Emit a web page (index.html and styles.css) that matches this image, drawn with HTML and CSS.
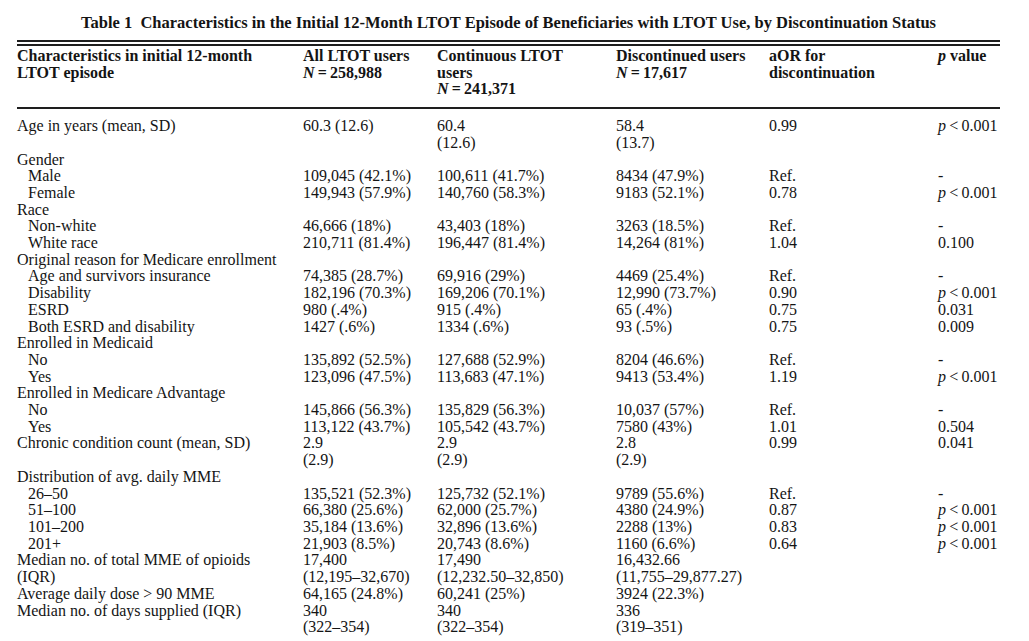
FILE: index.html
```html
<!DOCTYPE html>
<html lang="en">
<head>
<meta charset="utf-8">
<title>Table 1</title>
<link rel="stylesheet" href="styles.css">
</head>
<body>
<div class="page">
  <h1 class="title">Table 1&nbsp; Characteristics in the Initial 12-Month LTOT Episode of Beneficiaries with LTOT Use, by Discontinuation Status</h1>
  <div class="table">
    <div class="rule-double"></div>
    <div class="row head">
      <div>Characteristics in initial 12-month<br>LTOT episode</div>
      <div>All LTOT users<br><i>N</i>&thinsp;=&thinsp;258,988</div>
      <div>Continuous LTOT<br>users<br><i>N</i>&thinsp;=&thinsp;241,371</div>
      <div>Discontinued users<br><i>N</i>&thinsp;=&thinsp;17,617</div>
      <div>aOR for<br>discontinuation</div>
      <div><i>p</i> value</div>
    </div>
    <div class="body">
      <div class="row"><div>Age in years (mean, SD)</div><div>60.3 (12.6)</div><div>60.4<br>(12.6)</div><div>58.4<br>(13.7)</div><div>0.99</div><div><i>p</i>&thinsp;&lt;&thinsp;0.001</div></div>
      <div class="row"><div>Gender</div><div></div><div></div><div></div><div></div><div></div></div>
      <div class="row"><div class="ind">Male</div><div>109,045 (42.1%)</div><div>100,611 (41.7%)</div><div>8434 (47.9%)</div><div>Ref.</div><div>-</div></div>
      <div class="row"><div class="ind">Female</div><div>149,943 (57.9%)</div><div>140,760 (58.3%)</div><div>9183 (52.1%)</div><div>0.78</div><div><i>p</i>&thinsp;&lt;&thinsp;0.001</div></div>
      <div class="row"><div>Race</div><div></div><div></div><div></div><div></div><div></div></div>
      <div class="row"><div class="ind">Non-white</div><div>46,666 (18%)</div><div>43,403 (18%)</div><div>3263 (18.5%)</div><div>Ref.</div><div>-</div></div>
      <div class="row"><div class="ind">White race</div><div>210,711 (81.4%)</div><div>196,447 (81.4%)</div><div>14,264 (81%)</div><div>1.04</div><div>0.100</div></div>
      <div class="row"><div>Original reason for Medicare enrollment</div><div></div><div></div><div></div><div></div><div></div></div>
      <div class="row"><div class="ind">Age and survivors insurance</div><div>74,385 (28.7%)</div><div>69,916 (29%)</div><div>4469 (25.4%)</div><div>Ref.</div><div>-</div></div>
      <div class="row"><div class="ind">Disability</div><div>182,196 (70.3%)</div><div>169,206 (70.1%)</div><div>12,990 (73.7%)</div><div>0.90</div><div><i>p</i>&thinsp;&lt;&thinsp;0.001</div></div>
      <div class="row"><div class="ind">ESRD</div><div>980 (.4%)</div><div>915 (.4%)</div><div>65 (.4%)</div><div>0.75</div><div>0.031</div></div>
      <div class="row"><div class="ind">Both ESRD and disability</div><div>1427 (.6%)</div><div>1334 (.6%)</div><div>93 (.5%)</div><div>0.75</div><div>0.009</div></div>
      <div class="row"><div>Enrolled in Medicaid</div><div></div><div></div><div></div><div></div><div></div></div>
      <div class="row"><div class="ind">No</div><div>135,892 (52.5%)</div><div>127,688 (52.9%)</div><div>8204 (46.6%)</div><div>Ref.</div><div>-</div></div>
      <div class="row"><div class="ind">Yes</div><div>123,096 (47.5%)</div><div>113,683 (47.1%)</div><div>9413 (53.4%)</div><div>1.19</div><div><i>p</i>&thinsp;&lt;&thinsp;0.001</div></div>
      <div class="row"><div>Enrolled in Medicare Advantage</div><div></div><div></div><div></div><div></div><div></div></div>
      <div class="row"><div class="ind">No</div><div>145,866 (56.3%)</div><div>135,829 (56.3%)</div><div>10,037 (57%)</div><div>Ref.</div><div>-</div></div>
      <div class="row"><div class="ind">Yes</div><div>113,122 (43.7%)</div><div>105,542 (43.7%)</div><div>7580 (43%)</div><div>1.01</div><div>0.504</div></div>
      <div class="row"><div>Chronic condition count (mean, SD)</div><div>2.9<br>(2.9)</div><div>2.9<br>(2.9)</div><div>2.8<br>(2.9)</div><div>0.99</div><div>0.041</div></div>
      <div class="row"><div>Distribution of avg. daily MME</div><div></div><div></div><div></div><div></div><div></div></div>
      <div class="row"><div class="ind">26–50</div><div>135,521 (52.3%)</div><div>125,732 (52.1%)</div><div>9789 (55.6%)</div><div>Ref.</div><div>-</div></div>
      <div class="row"><div class="ind">51–100</div><div>66,380 (25.6%)</div><div>62,000 (25.7%)</div><div>4380 (24.9%)</div><div>0.87</div><div><i>p</i>&thinsp;&lt;&thinsp;0.001</div></div>
      <div class="row"><div class="ind">101–200</div><div>35,184 (13.6%)</div><div>32,896 (13.6%)</div><div>2288 (13%)</div><div>0.83</div><div><i>p</i>&thinsp;&lt;&thinsp;0.001</div></div>
      <div class="row"><div class="ind">201+</div><div>21,903 (8.5%)</div><div>20,743 (8.6%)</div><div>1160 (6.6%)</div><div>0.64</div><div><i>p</i>&thinsp;&lt;&thinsp;0.001</div></div>
      <div class="row"><div>Median no. of total MME of opioids<br>(IQR)</div><div>17,400<br>(12,195–32,670)</div><div>17,490<br>(12,232.50–32,850)</div><div>16,432.66<br>(11,755–29,877.27)</div><div></div><div></div></div>
      <div class="row"><div>Average daily dose &gt; 90 MME</div><div>64,165 (24.8%)</div><div>60,241 (25%)</div><div>3924 (22.3%)</div><div></div><div></div></div>
      <div class="row"><div>Median no. of days supplied (IQR)</div><div>340<br>(322–354)</div><div>340<br>(322–354)</div><div>336<br>(319–351)</div><div></div><div></div></div>
    </div>
  </div>
</div>
</body>
</html>
```

FILE: styles.css
```css
html, body {
  margin: 0;
  padding: 0;
  background: #ffffff;
}

body {
  font-family: "Liberation Serif", "Times New Roman", serif;
  color: #141414;
  font-size: 16px;
}

.page {
  padding: 14px 0 0 17px;
  width: 983px;
}

.title {
  margin: 0;
  font-size: 16.5px;
  font-weight: bold;
  line-height: 17px;
  text-align: center;
  white-space: nowrap;
}

.table {
  margin-top: 9px;
}

.rule-double {
  height: 2px;
  border-top: 2px solid #1e1e1e;
  border-bottom: 2px solid #1e1e1e;
}

.row {
  display: grid;
  grid-template-columns: 286px 134px 179px 153px 169px 62px;
  line-height: 16.7px;
  white-space: nowrap;
}

.head {
  font-weight: bold;
  padding: 2px 0 9px;
  border-bottom: 2px solid #1e1e1e;
}

.body {
  padding-top: 9px;
}

.ind {
  padding-left: 11px;
}
```
